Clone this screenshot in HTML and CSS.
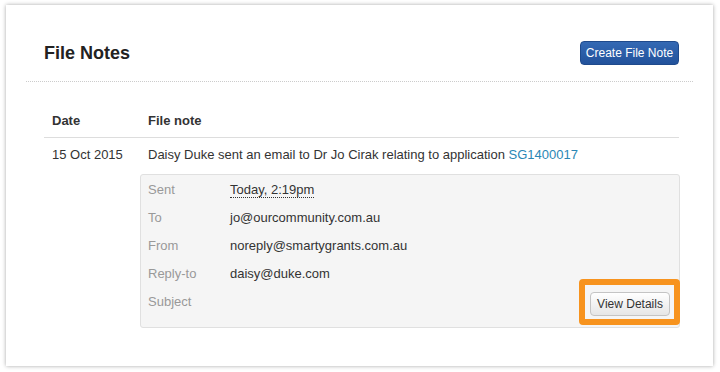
FILE: index.html
```html
<!DOCTYPE html>
<html lang="en">
<head>
    <meta charset="UTF-8">
    <meta name="viewport" content="width=device-width, initial-scale=1.0">
    <title>File Notes</title>
    <link rel="stylesheet" href="styles.css">
</head>
<body>
    <div class="card">
        <div class="card-header">
            <h2>File Notes</h2>
            <button class="btn-primary">Create File Note</button>
        </div>
        <table class="notes">
            <thead>
                <tr>
                    <th class="col-date">Date</th>
                    <th>File note</th>
                </tr>
            </thead>
            <tbody>
                <tr>
                    <td class="col-date">15 Oct 2015</td>
                    <td>
                        <div class="summary">Daisy Duke sent an email to Dr Jo Cirak relating to application <a href="#">SG1400017</a></div>
                        <div class="email-box">
                            <div class="email-row"><span class="label">Sent</span><span class="value"><abbr title="15 Oct 2015 2:19pm">Today, 2:19pm</abbr></span></div>
                            <div class="email-row"><span class="label">To</span><span class="value">jo@ourcommunity.com.au</span></div>
                            <div class="email-row"><span class="label">From</span><span class="value">noreply@smartygrants.com.au</span></div>
                            <div class="email-row"><span class="label">Reply-to</span><span class="value">daisy@duke.com</span></div>
                            <div class="email-row"><span class="label">Subject</span><span class="value"></span></div>
                            <div class="details-wrap">
                                <button class="btn-default">View Details</button>
                                <span class="highlight"></span>
                            </div>
                        </div>
                    </td>
                </tr>
            </tbody>
        </table>
    </div>
</body>
</html>
```

FILE: styles.css
```css
body {
    margin: 0;
    padding: 5px 7px 6px 6px;
    background-color: #fff;
    font-family: 'Liberation Sans', Arial, sans-serif;
    font-size: 13px;
    color: #333;
}

.card {
    height: 361px;
    background-color: #fff;
    box-shadow: 0 0 4px rgba(0, 0, 0, 0.35);
    overflow: hidden;
}

.card-header {
    margin: 0 20px;
    padding: 36px 14px 16px 18px;
    display: flex;
    justify-content: space-between;
    align-items: center;
    border-bottom: 1px dotted #ccc;
}

.card-header h2 {
    margin: 0;
    font-size: 18px;
    font-weight: bold;
    color: #222;
}

.btn-primary {
    height: 24px;
    width: 99px;
    padding: 0;
    font-family: inherit;
    font-size: 12px;
    color: #fff;
    background: linear-gradient(#3469b4, #22529b);
    border: 1px solid #1f4a8c;
    border-radius: 4px;
    cursor: pointer;
}

.notes {
    margin: 30px 34px 0 38px;
    width: 635px;
    border-collapse: collapse;
}

.notes th {
    text-align: left;
    font-weight: bold;
    line-height: 18px;
    padding: 0 8px 7px;
    border-bottom: 1px solid #ddd;
}

.notes td {
    vertical-align: top;
    line-height: 18px;
    padding: 8px 0 0 0;
}

.notes .col-date {
    width: 80px;
    padding-left: 8px;
    padding-right: 8px;
}

.summary {
    padding-left: 8px;
}

.summary a {
    color: #2a87b5;
    text-decoration: none;
}

.email-box {
    position: relative;
    margin-top: 10px;
    margin-right: -1px;
    padding: 1px 0 11px 7px;
    background-color: #f5f5f5;
    border: 1px solid #e0e0e0;
    border-radius: 3px;
}

.email-row {
    display: flex;
    height: 28px;
    align-items: center;
}

.email-row .label {
    width: 82px;
    color: #999;
}

.email-row abbr {
    text-decoration: none;
    border-bottom: 1px dotted #333;
}

.details-wrap {
    position: absolute;
    right: 9px;
    bottom: 11px;
}

.btn-default {
    display: block;
    height: 24px;
    width: 80px;
    padding: 0;
    font-family: inherit;
    font-size: 12px;
    color: #333;
    background: linear-gradient(#fff, #e6e6e6);
    border: 1px solid #c4c4c4;
    border-radius: 4px;
    cursor: pointer;
}

.highlight {
    position: absolute;
    left: -11px;
    right: -10px;
    top: -13px;
    bottom: -9px;
    border: 6px solid #f7931e;
    border-radius: 4px;
    pointer-events: none;
}
```
